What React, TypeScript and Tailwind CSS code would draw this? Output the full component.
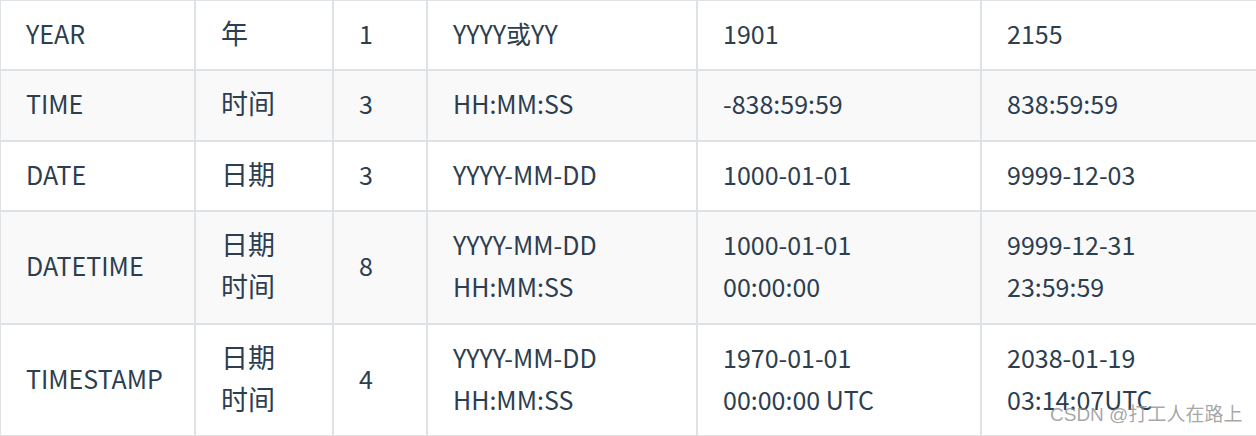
import * as React from 'react'

type Row = [string, string[], string, string[], string[], string[]]

const rows: Row[] = [
  ['YEAR', ['年'], '1', ['YYYY或YY'], ['1901'], ['2155']],
  ['TIME', ['时间'], '3', ['HH:MM:SS'], ['-838:59:59'], ['838:59:59']],
  ['DATE', ['日期'], '3', ['YYYY-MM-DD'], ['1000-01-01'], ['9999-12-03']],
  [
    'DATETIME',
    ['日期', '时间'],
    '8',
    ['YYYY-MM-DD', 'HH:MM:SS'],
    ['1000-01-01', '00:00:00'],
    ['9999-12-31', '23:59:59'],
  ],
  [
    'TIMESTAMP',
    ['日期', '时间'],
    '4',
    ['YYYY-MM-DD', 'HH:MM:SS'],
    ['1970-01-01', '00:00:00 UTC'],
    ['2038-01-19', '03:14:07UTC'],
  ],
]

const Lines: React.FC<{ lines: string[] }> = ({ lines }) => (
  <>
    {lines.map((l, i) => (
      <div key={i}>{l}</div>
    ))}
  </>
)

const cell =
  'border-2 border-[#dfe2e5] px-[25px] pt-[11px] pb-[14.75px] leading-[42.5px] align-middle text-left'

export default function App() {
  return (
    <div
      className="relative h-[436px] w-[1256px] overflow-hidden bg-white text-[25px] text-[#2c3e50]"
      style={{ fontFamily: '"Noto Sans CJK SC", "Noto Sans", sans-serif' }}
    >
      <table className="-ml-px -mt-px w-[1290px] table-fixed border-collapse">
        <colgroup>
          <col className="w-[195px]" />
          <col className="w-[138px]" />
          <col className="w-[94px]" />
          <col className="w-[270px]" />
          <col className="w-[284px]" />
          <col className="w-[309px]" />
        </colgroup>
        <tbody>
          {rows.map(([type, name, size, format, min, max], i) => (
            <tr key={type} className={i % 2 === 1 ? 'bg-[#f9f9f9]' : 'bg-white'}>
              <td className={cell}>{type}</td>
              <td className={`${cell} text-[27px]`}>
                <Lines lines={name} />
              </td>
              <td className={cell}>{size}</td>
              <td className={cell}>
                <Lines lines={format} />
              </td>
              <td className={cell}>
                <Lines lines={min} />
              </td>
              <td className={cell}>
                <Lines lines={max} />
              </td>
            </tr>
          ))}
        </tbody>
      </table>
      <span
        className="absolute left-[1050px] top-[403px] whitespace-nowrap text-[19px] leading-[24px] text-[#8f8f8f]/80"
        style={{ fontFamily: '"Liberation Sans", "Noto Sans CJK SC", sans-serif' }}
      >
        CSDN @打工人在路上
      </span>
    </div>
  )
}
